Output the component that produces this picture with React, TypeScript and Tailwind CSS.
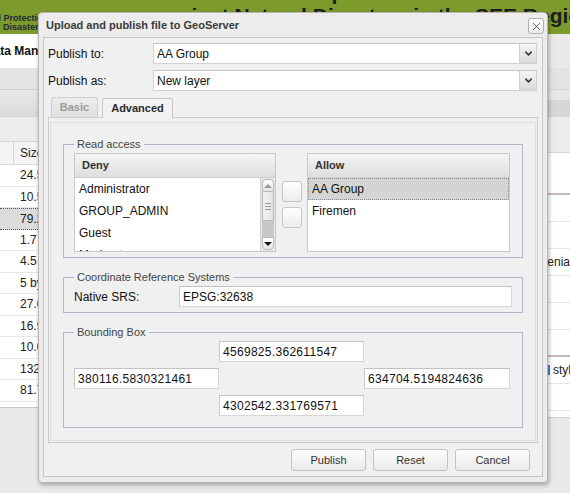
import { ChevronDown, X } from 'lucide-react';

const leftRows = ['24.5 KB', '10.5 KB', '79.2 KB', '1.7 MB', '4.5 KB', '5 bytes', '27.0 KB', '16.9 KB', '10.0 KB', '132 KB', '81.7 KB'];

const rightRows = ['', '', 'Slovenia', '', '', '', 'style', ''];

function BackgroundPage() {
  return (
    <div className="flex flex-col w-full h-full">
      {/* green header */}
      <div className="h-[34px] bg-[#7c9b2c] flex items-start overflow-hidden">
        <div className="mt-[14px] text-[9px] leading-[9px] font-bold text-[#1f2a3a] whitespace-nowrap">
          <div className="-ml-[18px]">Civil Protection</div>
          <div className="ml-[3px]">Disaster Prevention</div>
        </div>
        <div className="ml-auto -mr-[24px] -mt-[19px] text-right text-[21px] leading-[23px] font-bold text-[#1d1d1d] whitespace-nowrap">
          <div>Disaster Preparedness and Prevention</div>
          <div>against Natural Disasters in the SEE Region</div>
        </div>
      </div>

      <div className="flex flex-1">
        {/* left panel */}
        <div className="w-[300px] shrink-0 flex flex-col">
          <div className="h-[34px] bg-white flex items-center">
            <span className="-ml-[15px] text-[12px] font-bold text-[#111]">Data Management</span>
          </div>
          <div className="h-[22px] bg-[#e4e4e4] border-b border-[#cfcfcf]" />
          <div className="h-[27px] bg-gradient-to-b from-[#e8e8e8] to-[#dadada] border-b border-[#d2d2d2]" />
          <div className="h-[24px] bg-[#ececec]" />
          <div className="flex flex-col bg-white border-t border-[#d4d4d4]">
            <div className="h-[23px] flex bg-[#f4f4f4] border-b border-[#dcdcdc] text-[12px] text-[#222]">
              <div className="w-[14px] border-r border-[#d6d6d6]" />
              <div className="flex items-center pl-[6px]">Size</div>
            </div>
            {leftRows.map((r, i) => (
              <div
                key={r}
                className={
                  i === 2
                    ? 'h-[21.5px] flex items-center bg-[#dcdcdc] border-y border-dotted border-[#555] text-[12px] text-[#222] pl-[20px]'
                    : 'h-[21.5px] flex items-center border-b border-[#e6e6e6] text-[12px] text-[#222] pl-[20px]'
                }
              >
                {r}
              </div>
            ))}
          </div>
          <div className="h-[6px] bg-white border-b border-[#c8c8c8]" />
          <div className="flex-1 bg-[#e9e9e9]" />
        </div>

        {/* right panel */}
        <div className="flex-1 flex flex-col">
          <div className="h-[34px] bg-[#e9e9e9]" />
          <div className="h-[22px] bg-[#e3e3e3] border-b border-[#d6d6d6]" />
          <div className="h-[10px] bg-[#e6e6e6]" />
          <div className="h-[17px] bg-[#d6d6d6]" />
          <div className="h-[36px] bg-[#ececec] border-b border-[#d8d8d8]" />
          <div className="h-[42px] bg-white border-b-2 border-[#c9b9b9]" />
          {rightRows.map((t, i) => (
            <div
              key={i}
              className={
                i === 5
                  ? 'h-[27px] flex items-center bg-white border-b-2 border-[#c9b9b9] text-[12px] text-[#222] whitespace-nowrap'
                  : 'h-[27px] flex items-center bg-white border-b border-[#e4e4e4] text-[12px] text-[#222] whitespace-nowrap'
              }
            >
              {t === 'Slovenia' && <span className="ml-[224px] shrink-0">Slovenia</span>}
              {t === 'style' && (
                <div className="ml-[239px] shrink-0 flex items-center">
                  <span className="w-[11px] h-[10px] shrink-0 bg-[#4a7fc0] mr-[3px]" />
                  <span className="shrink-0">style</span>
                </div>
              )}
            </div>
          ))}
          <div className="h-[7px] bg-white border-b border-[#d0d0d0]" />
          <div className="flex-1 bg-[#e9e9e9]" />
        </div>
      </div>
    </div>
  );
}

function TextBox({ value, className = '' }: { value: string; className?: string }) {
  return (
    <div
      className={`h-[21px] bg-white border border-[#d6d6d6] border-t-[#c2c2c2] border-l-[#cacaca] flex items-center px-[3px] text-[12px] text-[#111] ${className}`}
    >
      {value}
    </div>
  );
}

function Combo({ value }: { value: string }) {
  return (
    <div className="w-[384px] h-[21px] flex bg-white border border-[#d2d2d2] border-t-[#c4c4c4]">
      <div className="flex-1 flex items-center px-[3px] text-[12px] text-[#111]">{value}</div>
      <div className="w-[17px] flex items-center justify-center border-l border-[#cfcfcf] bg-gradient-to-b from-[#f6f6f6] to-[#d9d9d9]">
        <ChevronDown size={11} strokeWidth={3.2} className="text-[#333]" />
      </div>
    </div>
  );
}

function Scrollbar() {
  return (
    <div className="w-[15px] flex flex-col border-l border-[#d0d0d0] bg-[#e8e8e8] py-[1px] px-[1px]">
      <div className="h-[13px] rounded-t-[4px] border border-[#b8b8b8] bg-gradient-to-b from-white to-[#e6e6e6] flex items-center justify-center">
        <div className="w-0 h-0 border-x-[4px] border-x-transparent border-b-[4px] border-b-[#9a9a9a]" />
      </div>
      <div className="h-[29px] border-x border-b border-[#b8b8b8] bg-gradient-to-r from-[#f2f2f2] to-[#e2e2e2] flex flex-col items-center justify-center gap-[2px]">
        <div className="w-[6px] h-px bg-[#9c9c9c]" />
        <div className="w-[6px] h-px bg-[#9c9c9c]" />
        <div className="w-[6px] h-px bg-[#9c9c9c]" />
      </div>
      <div className="flex-1 bg-[#c8c8c8]" />
      <div className="h-[13px] rounded-b-[4px] border border-[#b8b8b8] bg-gradient-to-b from-white to-[#e6e6e6] flex items-center justify-center">
        <div className="w-0 h-0 border-x-[4px] border-x-transparent border-t-[4px] border-t-[#111]" />
      </div>
    </div>
  );
}

function SmallButton() {
  return <div className="w-[20px] h-[21px] rounded-[3px] border border-[#c6c6c6] bg-gradient-to-b from-white to-[#ececec]" />;
}

function Legend({ children }: { children: string }) {
  return <legend className="px-[3px] text-[11px] leading-[15px] text-[#444]">{children}</legend>;
}

function GridHeader({ children }: { children: string }) {
  return (
    <div className="h-[24px] flex items-center pl-[7px] border-b border-[#cfcfcf] bg-gradient-to-b from-[#f4f4f4] to-[#dedede] text-[11px] font-bold text-[#333]">
      {children}
    </div>
  );
}

function UploadDialog() {
  return (
    <div className="absolute left-[38px] top-[12px] w-[510px] h-[471px] flex flex-col rounded-[4px] border border-[#bdb3b3] bg-[#ececec] shadow-[1px_2px_4px_rgba(0,0,0,0.3)] px-[4px] pb-[5px] font-['Liberation_Sans',Arial,sans-serif]">
      {/* title bar */}
      <div className="h-[24px] flex items-center justify-between pl-[3px] pr-0">
        <span className="text-[11px] font-bold text-[#3a3a3a]">Upload and publish file to GeoServer</span>
        <div className="w-[16px] h-[16px] mt-[2px] -mr-[1px] rounded-[3px] border border-[#b0b0b0] bg-gradient-to-b from-white to-[#ececec] flex items-center justify-center">
          <X size={13} strokeWidth={1.4} className="text-[#444]" />
        </div>
      </div>

      {/* body */}
      <div className="flex-1 flex flex-col border border-[#cbc3c3] bg-[#f0f0f0] pl-[4px] pr-[3px]">
        <div className="flex items-center h-[21px] mt-[5px]">
          <span className="w-[105px] text-[12px] text-[#111]">Publish to:</span>
          <Combo value="AA Group" />
        </div>
        <div className="flex items-center h-[21px] mt-[6px]">
          <span className="w-[105px] text-[12px] text-[#111]">Publish as:</span>
          <Combo value="New layer" />
        </div>

        {/* tabs */}
        <div className="flex items-end gap-[4px] h-[20px] mt-[6px] pl-[3px]">
          <div className="w-[47px] h-[20px] rounded-t-[3px] border border-b-0 border-[#cfcfcf] bg-gradient-to-b from-[#ececec] to-[#e0e0e0] flex items-center justify-center text-[11px] font-bold text-[#9a9a9a]">
            Basic
          </div>
          <div className="w-[71px] h-[20px] rounded-t-[3px] border border-b-0 border-[#c6c6c6] bg-[#f2f2f2] flex items-center justify-center text-[11px] font-bold text-[#2a2a2a] relative top-px">
            Advanced
          </div>
        </div>

        {/* tab panel */}
        <div className="w-[490px] h-[326px] border border-[#cccccc] bg-[#f0f0f0] pt-[4px] px-px pb-px">
          <div className="h-full flex flex-col border border-[#dedede] bg-[#f0f0f0] px-[12px] pt-[14px]">
            <fieldset className="border border-[#b5b5c8] pl-[10px] pr-[10px] pt-px pb-[5px] min-w-0">
              <Legend>Read access</Legend>
              <div className="flex items-start">
                <div className="w-[202px] h-[99px] flex flex-col border border-[#c8c8c8] bg-white">
                  <GridHeader>Deny</GridHeader>
                  <div className="flex-1 flex min-h-0">
                    <div className="flex-1 overflow-hidden text-[12px] text-[#111] pl-[4px]">
                      <div className="h-[22px] flex items-center">Administrator</div>
                      <div className="h-[22px] flex items-center">GROUP_ADMIN</div>
                      <div className="h-[22px] flex items-center">Guest</div>
                      <div className="h-[22px] flex items-center">Moderators</div>
                    </div>
                    <Scrollbar />
                  </div>
                </div>
                <div className="flex flex-col gap-[5px] mt-[28px] ml-[6px] mr-[5px]">
                  <SmallButton />
                  <SmallButton />
                </div>
                <div className="w-[203px] h-[99px] flex flex-col border border-[#c8c8c8] bg-white">
                  <GridHeader>Allow</GridHeader>
                  <div className="text-[12px] text-[#111]">
                    <div className="h-[22px] flex items-center pl-[3px] bg-[#d4d4d4] border border-dotted border-[#8a8a8a]">AA Group</div>
                    <div className="h-[22px] flex items-center pl-[4px]">Firemen</div>
                  </div>
                </div>
              </div>
            </fieldset>

            <fieldset className="mt-[12px] border border-[#b5b5c8] pl-[10px] pr-[10px] pt-px pb-[5px] min-w-0">
              <Legend>Coordinate Reference Systems</Legend>
              <div className="flex items-center">
                <span className="w-[105px] text-[12px] text-[#111]">Native SRS:</span>
                <TextBox value="EPSG:32638" className="flex-1" />
              </div>
            </fieldset>

            <fieldset className="mt-[12px] border border-[#b5b5c8] pl-[10px] pr-[10px] pt-px pb-[11px] min-w-0">
              <Legend>Bounding Box</Legend>
              <div className="grid grid-cols-[145px_145px_146px] gap-y-[6px]">
                <div />
                <TextBox value="4569825.362611547" className="tracking-[0.3px]" />
                <div />
                <TextBox value="380116.5830321461" className="tracking-[0.3px]" />
                <div />
                <TextBox value="634704.5194824636" className="tracking-[0.3px]" />
                <div />
                <TextBox value="4302542.331769571" className="tracking-[0.3px]" />
                <div />
              </div>
            </fieldset>
          </div>
        </div>

        {/* footer buttons */}
        <div className="flex justify-end gap-[7px] mt-[6px] pr-[9px]">
          {['Publish', 'Reset', 'Cancel'].map((b) => (
            <div
              key={b}
              className="w-[75px] h-[22px] rounded-[3px] border border-[#c2c2c2] bg-gradient-to-b from-white to-[#e9e9e9] flex items-center justify-center text-[11px] text-[#333]"
            >
              {b}
            </div>
          ))}
        </div>
      </div>
    </div>
  );
}

export default function App() {
  return (
    <div className="relative w-[570px] h-[493px] overflow-hidden bg-[#e9e9e9] font-['Liberation_Sans',Arial,sans-serif]">
      <BackgroundPage />
      <UploadDialog />
    </div>
  );
}
